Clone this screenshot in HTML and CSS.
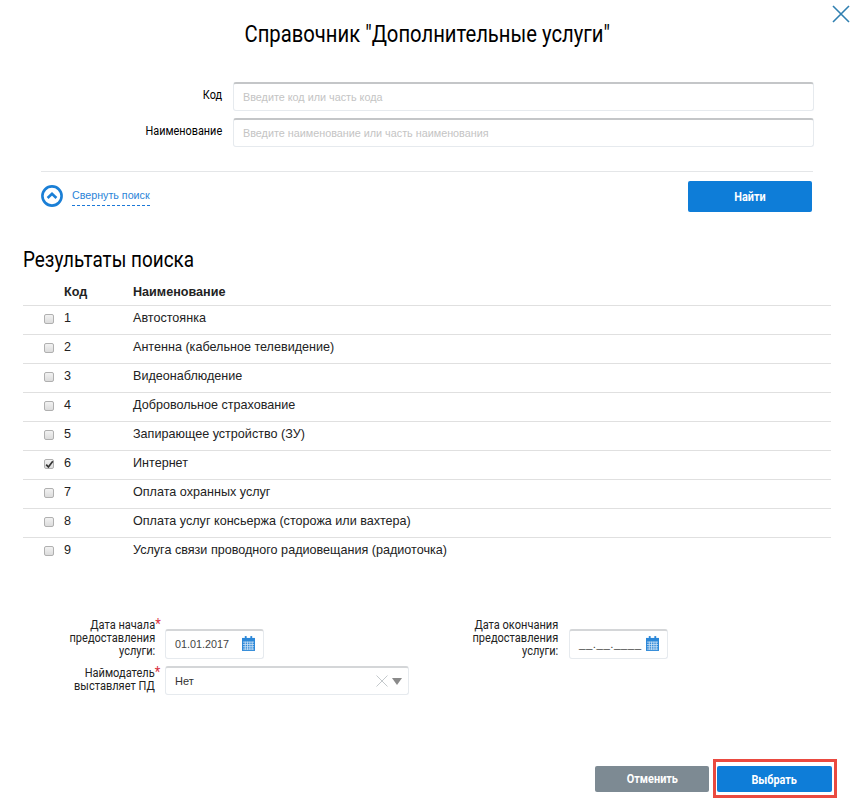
FILE: index.html
```html
<!DOCTYPE html>
<html lang="ru">
<head>
<meta charset="utf-8">
<title>Справочник</title>
<link rel="stylesheet" href="styles.css">
</head>
<body>
<div class="dialog">
  <button class="close" aria-label="Закрыть">
    <svg width="18" height="18" viewBox="0 0 18 18"><path d="M1 1L17 17M17 1L1 17" stroke="#2f7fb0" stroke-width="1.6" fill="none"/></svg>
  </button>
  <h1 class="title"><span>Справочник "Дополнительные услуги"</span></h1>

  <div class="search">
    <div class="field">
      <label class="field-label"><span>Код</span></label>
      <div class="text-input">Введите код или часть кода</div>
    </div>
    <div class="field">
      <label class="field-label"><span>Наименование</span></label>
      <div class="text-input">Введите наименование или часть наименования</div>
    </div>
  </div>

  <div class="search-bar">
    <a class="collapse">
      <svg width="22" height="22" viewBox="0 0 22 22"><circle cx="11" cy="11" r="9.6" fill="#fff" stroke="#1a7fd6" stroke-width="2.6"/><path d="M6.6 13L11 8.8L15.4 13" fill="none" stroke="#1a7fd6" stroke-width="2.6"/></svg>
      <span class="collapse-text">Свернуть поиск</span>
    </a>
    <button class="btn btn-find"><span>Найти</span></button>
  </div>

  <h2 class="results-title"><span>Результаты поиска</span></h2>

  <div class="table">
    <div class="row head"><div class="c-check"></div><div class="c-code">Код</div><div class="c-name">Наименование</div></div>
    <div class="row"><div class="c-check"><span class="box"></span></div><div class="c-code">1</div><div class="c-name">Автостоянка</div></div>
    <div class="row"><div class="c-check"><span class="box"></span></div><div class="c-code">2</div><div class="c-name">Антенна (кабельное телевидение)</div></div>
    <div class="row"><div class="c-check"><span class="box"></span></div><div class="c-code">3</div><div class="c-name">Видеонаблюдение</div></div>
    <div class="row"><div class="c-check"><span class="box"></span></div><div class="c-code">4</div><div class="c-name">Добровольное страхование</div></div>
    <div class="row"><div class="c-check"><span class="box"></span></div><div class="c-code">5</div><div class="c-name">Запирающее устройство (ЗУ)</div></div>
    <div class="row"><div class="c-check"><span class="box checked"><svg width="9" height="9" viewBox="0 0 9 9"><path d="M1.2 4.6L3.4 7L7.8 1.2" fill="none" stroke="#333" stroke-width="1.7"/></svg></span></div><div class="c-code">6</div><div class="c-name">Интернет</div></div>
    <div class="row"><div class="c-check"><span class="box"></span></div><div class="c-code">7</div><div class="c-name">Оплата охранных услуг</div></div>
    <div class="row"><div class="c-check"><span class="box"></span></div><div class="c-code">8</div><div class="c-name">Оплата услуг консьержа (сторожа или вахтера)</div></div>
    <div class="row last"><div class="c-check"><span class="box"></span></div><div class="c-code">9</div><div class="c-name">Услуга связи проводного радиовещания (радиоточка)</div></div>
  </div>

  <div class="details">
    <div class="detail-line">
      <div class="detail">
        <div class="d-label"><span>Дата начала<i class="req">*</i><br>предоставления<br>услуги:</span></div>
        <div class="date-input"><span class="date-val">01.01.2017</span>
          <svg class="cal" width="13" height="15" viewBox="0 0 14 16"><rect x="0" y="2" width="14" height="14" fill="#2b87d8"/><rect x="3" y="0" width="2" height="3" fill="#2b87d8"/><rect x="9" y="0" width="2" height="3" fill="#2b87d8"/><path d="M1 6.5H13M1 9H13M1 11.5H13M1 14H13M3.5 6V15M6 6V15M8.5 6V15M11 6V15" stroke="#cfe3f5" stroke-width="0.9"/></svg>
        </div>
      </div>
      <div class="detail detail-right">
        <div class="d-label"><span>Дата окончания<br>предоставления<br>услуги:</span></div>
        <div class="date-input"><span class="date-val mask">__.__.____</span>
          <svg class="cal" width="13" height="15" viewBox="0 0 14 16"><rect x="0" y="2" width="14" height="14" fill="#2b87d8"/><rect x="3" y="0" width="2" height="3" fill="#2b87d8"/><rect x="9" y="0" width="2" height="3" fill="#2b87d8"/><path d="M1 6.5H13M1 9H13M1 11.5H13M1 14H13M3.5 6V15M6 6V15M8.5 6V15M11 6V15" stroke="#cfe3f5" stroke-width="0.9"/></svg>
        </div>
      </div>
    </div>
    <div class="detail detail-select">
      <div class="d-label"><span>Наймодатель<i class="req">*</i><br>выставляет ПД</span></div>
      <div class="select">
        <span class="select-val">Нет</span>
        <svg class="x" width="12" height="12" viewBox="0 0 12 12"><path d="M0.5 0.5L11.5 11.5M11.5 0.5L0.5 11.5" stroke="#c4c9cc" stroke-width="1"/></svg>
        <span class="arrow"></span>
      </div>
    </div>
  </div>

  <div class="actions">
    <button class="btn btn-cancel"><span>Отменить</span></button>
    <div class="highlight"><button class="btn btn-select"><span>Выбрать</span></button></div>
  </div>
</div>
</body>
</html>
```
FILE: styles.css
```css
* { box-sizing: border-box; }
html, body { margin: 0; padding: 0; background: #fff; }
body {
  width: 855px;
  height: 805px;
  overflow: hidden;
  font-family: "Liberation Sans", Arial, sans-serif;
  font-size: 12px;
  color: #222;
}
.dialog { position: relative; width: 855px; height: 805px; }

.close {
  position: absolute;
  top: 5px;
  right: 5px;
  padding: 0;
  border: 0;
  background: none;
  width: 18px;
  height: 18px;
  display: block;
}
.close svg { display: block; }

.title {
  margin: 0;
  padding-top: 20px;
  height: 82px;
  text-align: center;
  font-family: Roboto, sans-serif;
  font-weight: 400;
  font-size: 24.5px;
  line-height: 28px;
  color: #000;
}
.title span { display: inline-block; transform: scaleX(0.826); white-space: nowrap; }

.search { display: flex; flex-direction: column; gap: 7px; padding-right: 41px; }
.field { display: flex; align-items: flex-start; }
.field-label {
  width: 222px;
  flex: none;
  text-align: right;
  font-family: Roboto, sans-serif;
  font-size: 12.5px;
  line-height: 16px;
  padding-top: 5px;
  color: #000;
}
.field-label span { display: inline-block; transform: scaleX(0.87); transform-origin: right center; }
.text-input {
  margin-left: 11px;
  flex: 1;
  height: 29px;
  border: 1px solid #e6eaee;
  border-top: 2px solid #c4c6c8;
  border-radius: 3px;
  padding: 0 9px;
  line-height: 27px;
  font-size: 10.8px;
  color: #c4c4c4;
}

.search-bar {
  margin: 24px 42px 0 41px;
  border-top: 1px solid #e4e6e8;
  height: 75px;
  padding-top: 9px;
  display: flex;
  justify-content: space-between;
  align-items: flex-start;
}
.collapse { display: flex; align-items: flex-start; padding-top: 4px; }
.collapse svg { display: block; flex: none; }
.collapse-text {
  margin-left: 9px;
  margin-top: 3px;
  color: #2b84d8;
  font-size: 10.7px;
  line-height: 15px;
  height: 18px;
  border-bottom: 1px dashed #1a78d8;
}
.btn {
  border: 0;
  padding: 0;
  border-radius: 2px;
  color: #fff;
  font-family: Roboto, sans-serif;
  font-weight: 700;
  font-size: 12.5px;
  display: block;
}
.btn span { display: inline-block; transform: scaleX(0.87); }
.btn-find { width: 124px; height: 31px; margin-right: 1px; background: #0e7dd8; }

.results-title {
  margin: 0 0 0 23px;
  font-family: Roboto, sans-serif;
  font-weight: 400;
  font-size: 22.5px;
  line-height: 26px;
  color: #000;
  height: 32px;
}
.results-title span { display: inline-block; transform: scaleX(0.84); transform-origin: left center; white-space: nowrap; }

.table { margin: 0 24px 0 23px; }
.row {
  display: flex;
  height: 29px;
  border-bottom: 1px solid #e0e0e0;
  align-items: center;
  font-size: 12.6px;
  color: #222;
}
.row.head { height: 28px; font-weight: 700; }
.row.last { border-bottom-color: transparent; }
.c-check { width: 41px; flex: none; padding-left: 21px; display: flex; }
.c-code { width: 69px; flex: none; }
.c-name { flex: 1; }
.row:not(.head) .c-code,
.row:not(.head) .c-name { padding-bottom: 5px; }
.box {
  width: 10px;
  height: 10px;
  display: flex;
  align-items: center;
  justify-content: center;
  margin-top: -2px;
  background: linear-gradient(#f2f2f2, #dcdcdc);
  border: 1px solid #b0b0b0;
  border-radius: 2px;
}
.box svg { display: block; flex: none; }

.details { margin-top: 51px; }
.detail-line { display: flex; height: 48px; }
.detail { display: flex; align-items: flex-start; }
.d-label {
  width: 155px;
  flex: none;
  text-align: right;
  font-family: Roboto, sans-serif;
  font-size: 12px;
  line-height: 13px;
  color: #222;
  padding-top: 1px;
}
.d-label span { display: inline-block; transform: scaleX(0.92); transform-origin: right center; }
.detail-line .detail:first-child { width: 264px; flex: none; }
.detail-right .d-label { width: 294px; }
.req { position: absolute; color: #d8303f; font-style: normal; font-size: 14px; margin-top: -1px; }
.date-input {
  margin-left: 10px;
  margin-top: 11px;
  width: 99px;
  height: 30px;
  flex: none;
  border: 1px solid #e6eaee;
  border-top: 2px solid #d4d6d8;
  border-radius: 3px;
  position: relative;
  padding-left: 9px;
  line-height: 26px;
  font-size: 10.8px;
  color: #444;
}
.detail-right .date-input { margin-left: 11px; }
.cal { position: absolute; top: 5px; right: 8px; }
.mask { color: #444; font-size: 11.5px; letter-spacing: 0.5px; }
.select {
  margin-left: 10px;
  width: 244px;
  height: 29px;
  border: 1px solid #e6eaee;
  border-top: 2px solid #d4d6d8;
  border-radius: 3px;
  display: flex;
  align-items: center;
  padding: 0 6px 0 9px;
  font-size: 11px;
  color: #333;
}
.select-val { flex: 1; }
.x { display: block; flex: none; }
.arrow {
  width: 0;
  height: 0;
  margin-left: 4px;
  border-left: 5.5px solid transparent;
  border-right: 5.5px solid transparent;
  border-top: 7px solid #8a8a8a;
}

.actions {
  position: absolute;
  right: 18px;
  bottom: 7px;
  display: flex;
  align-items: center;
  gap: 4px;
}
.btn-cancel { width: 114px; height: 26px; background: #7d8a93; }
.highlight { border: 3px solid #ea4a40; padding: 4px 2px 3px 1px; }
.btn-select { width: 115px; height: 26px; background: #0e7dd8; }
```
